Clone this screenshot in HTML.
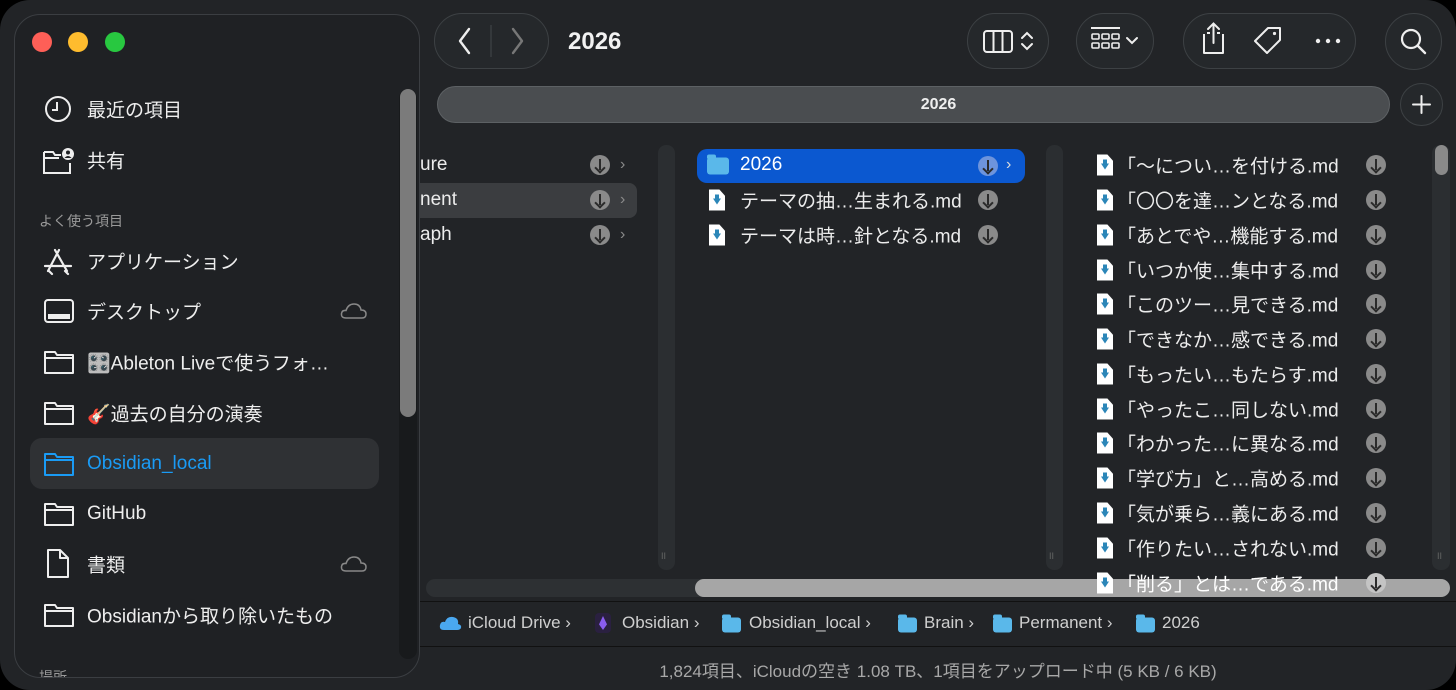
<!DOCTYPE html>
<html><head><meta charset="utf-8"><style>
*{margin:0;padding:0;box-sizing:border-box}
body{width:1456px;height:690px;background:#000;overflow:hidden;font-family:"Liberation Sans","Noto Sans CJK JP",sans-serif;color:#ececec}
.win{position:absolute;left:0;top:0;width:1456px;height:690px;background:#222427;border-radius:30px;overflow:hidden}
.a{position:absolute;white-space:nowrap}
.pill{position:absolute;border:1px solid #3d4144;border-radius:28px;background:#25282b}
.side{position:absolute;left:14px;top:14px;width:406px;height:664px;border-radius:26px;background:#1f2124;border:1px solid #3b3e42;overflow:hidden}
.si{position:absolute;left:72px;font-size:19px;color:#eee;transform:translateY(-50%)}
.dl{position:absolute;width:20px;height:20px;border-radius:50%;background:#8a8a8a;transform:translate(-50%,-50%)}
.dl:after{content:"";position:absolute;left:9px;top:4px;width:2px;height:11px;background:#2a2a2a}
.dl:before{content:"";position:absolute;left:6px;top:9px;width:6px;height:6px;border-right:2px solid #2a2a2a;border-bottom:2px solid #2a2a2a;transform:rotate(45deg)}
.chev{position:absolute;color:#8a8a8a;font-size:16px;transform:translateY(-50%)}
.fi{position:absolute;width:16px;height:21px;background:#fff;transform:translateY(-50%);clip-path:polygon(0 0,65% 0,100% 30%,100% 100%,0 100%)}
.fi:after{content:"";position:absolute;left:4px;top:9px;border:4px solid transparent;border-top:6px solid #2b86b8}
.fi:before{content:"";position:absolute;left:6px;top:5px;width:4px;height:5px;background:#2b86b8}
.ft{position:absolute;font-size:19px;color:#ececec;transform:translateY(-50%)}
.fold{position:absolute;width:22px;height:17px;background:#5ab8ea;border-radius:3px;transform:translateY(-50%)}
.fold:before{content:"";position:absolute;left:0;top:-3px;width:9px;height:4px;background:#5ab8ea;border-radius:2px 2px 0 0}
.pt{position:absolute;top:623px;font-size:17px;color:#cfcfcf;transform:translateY(-50%)}
</style></head><body><div class="win">

<div class="a" style="left:270px;top:140px;width:20px;height:430px;background:#262a2d"></div>

<div class="pill" style="left:434px;top:13px;width:115px;height:56px"></div>
<svg class="a" style="left:434px;top:13px" width="115" height="56"><path d="M35 16 L26 28 L35 40" stroke="#eee" stroke-width="2.4" fill="none" stroke-linecap="round" stroke-linejoin="round"/><line x1="57" y1="12" x2="57" y2="44" stroke="#44484b"/><path d="M79 16 L88 28 L79 40" stroke="#777" stroke-width="2.4" fill="none" stroke-linecap="round" stroke-linejoin="round"/></svg>
<div class="a" style="left:568px;top:28px;font-size:24px;font-weight:bold;color:#f2f2f2">2026</div>

<div class="pill" style="left:967px;top:13px;width:82px;height:56px"></div>
<svg class="a" style="left:967px;top:13px" width="82" height="56"><rect x="17" y="18" width="28" height="21" rx="3" stroke="#eee" stroke-width="2" fill="none"/><line x1="26.5" y1="18" x2="26.5" y2="39" stroke="#eee" stroke-width="2"/><line x1="35.5" y1="18" x2="35.5" y2="39" stroke="#eee" stroke-width="2"/><path d="M55 25 L60 20 L65 25 M55 31 L60 36 L65 31" stroke="#eee" stroke-width="2" fill="none" stroke-linecap="round"/></svg>
<div class="pill" style="left:1076px;top:13px;width:78px;height:56px"></div>
<svg class="a" style="left:1076px;top:13px" width="78" height="56"><line x1="15" y1="15" x2="44" y2="15" stroke="#eee" stroke-width="2"/><g stroke="#eee" stroke-width="1.6" fill="none"><rect x="16" y="21" width="7" height="5" rx="1"/><rect x="26" y="21" width="7" height="5" rx="1"/><rect x="36" y="21" width="7" height="5" rx="1"/><rect x="16" y="30" width="7" height="5" rx="1"/><rect x="26" y="30" width="7" height="5" rx="1"/><rect x="36" y="30" width="7" height="5" rx="1"/></g><path d="M51 25 L56 30 L61 25" stroke="#eee" stroke-width="2" fill="none" stroke-linecap="round"/></svg>
<div class="pill" style="left:1183px;top:13px;width:173px;height:56px"></div>
<svg class="a" style="left:1183px;top:13px" width="173" height="56"><path d="M21 21 L21 40 L40 40 L40 21 M27 20 L24 20 M34 20 L37 20" stroke="#eee" stroke-width="2" fill="none" stroke-linejoin="round"/><path d="M30.5 30 L30.5 11 M25 16 L30.5 10.5 L36 16" stroke="#eee" stroke-width="2" fill="none" stroke-linecap="round"/><path d="M72 28 L85 15 L97 15 L97 27 L84 40 Z" stroke="#eee" stroke-width="2" fill="none" stroke-linejoin="round"/><circle cx="91.5" cy="20.5" r="1.6" fill="#eee"/><circle cx="135" cy="28" r="2.2" fill="#eee"/><circle cx="145" cy="28" r="2.2" fill="#eee"/><circle cx="155" cy="28" r="2.2" fill="#eee"/></svg>
<div class="pill" style="left:1385px;top:13px;width:57px;height:57px;border-radius:50%"></div>
<svg class="a" style="left:1385px;top:13px" width="57" height="57"><circle cx="26" cy="26" r="9" stroke="#eee" stroke-width="2.2" fill="none"/><line x1="33" y1="33" x2="40" y2="40" stroke="#eee" stroke-width="2.4" stroke-linecap="round"/></svg>

<div class="a" style="left:437px;top:86px;width:953px;height:37px;border-radius:19px;background:#4a4d50;border:1px solid #5d6164"></div>
<div class="a" style="left:437px;top:96px;width:1003px;text-align:center;font-size:16px;font-weight:bold;color:#eee">2026</div>
<div class="pill" style="left:1400px;top:83px;width:43px;height:43px;border-radius:50%"></div>
<svg class="a" style="left:1400px;top:83px" width="43" height="43"><path d="M21.5 13 V30 M13 21.5 H30" stroke="#eee" stroke-width="2" stroke-linecap="round"/></svg>

<div class="a" style="left:420px;top:183px;width:217px;height:35px;background:#3b3d40;border-radius:0 8px 8px 0"></div>
<div class="ft" style="left:420px;top:165px">ure</div>
<div class="ft" style="left:420px;top:200px">nent</div>
<div class="ft" style="left:420px;top:235px">aph</div>
<div class="dl" style="left:600px;top:165px"></div><div class="dl" style="left:600px;top:200px"></div><div class="dl" style="left:600px;top:235px"></div>
<div class="chev" style="left:620px;top:165px">›</div><div class="chev" style="left:620px;top:200px">›</div><div class="chev" style="left:620px;top:235px">›</div>

<div class="a" style="left:658px;top:145px;width:17px;height:425px;background:#2b2e31;border-radius:8px"></div>
<div class="a" style="left:1046px;top:145px;width:17px;height:425px;background:#2b2e31;border-radius:8px"></div>
<div class="a" style="left:1432px;top:145px;width:18px;height:425px;background:#2b2e31;border-radius:8px"></div>
<div class="a" style="left:1435px;top:145px;width:13px;height:30px;background:#8a8a8a;border-radius:7px"></div>
<div class="a" style="left:661px;top:551px;font-size:9px;color:#666">II</div>
<div class="a" style="left:1049px;top:551px;font-size:9px;color:#666">II</div>
<div class="a" style="left:1437px;top:551px;font-size:9px;color:#666">II</div>

<div class="a" style="left:697px;top:149px;width:328px;height:34px;background:#0b58d0;border-radius:10px"></div>
<div class="fold" style="left:707px;top:166px"></div>
<div class="ft" style="left:740px;top:165px;color:#fff">2026</div>
<div class="dl" style="left:988px;top:166px;background:#6d94dc"></div>
<div class="chev" style="left:1006px;top:165px;color:#ddd">›</div>
<div class="fi" style="left:709px;top:200px"></div><div class="ft" style="left:740px;top:200px">テーマの抽…生まれる.md</div><div class="dl" style="left:988px;top:200px"></div>
<div class="fi" style="left:709px;top:235px"></div><div class="ft" style="left:740px;top:235px">テーマは時…針となる.md</div><div class="dl" style="left:988px;top:235px"></div>

<div class="fi" style="left:1097px;top:165px"></div><div class="ft" style="left:1117px;top:165px">「〜につい…を付ける.md</div><div class="dl" style="left:1376px;top:165px"></div>
<div class="fi" style="left:1097px;top:200px"></div><div class="ft" style="left:1117px;top:200px">「〇〇を達…ンとなる.md</div><div class="dl" style="left:1376px;top:200px"></div>
<div class="fi" style="left:1097px;top:235px"></div><div class="ft" style="left:1117px;top:235px">「あとでや…機能する.md</div><div class="dl" style="left:1376px;top:235px"></div>
<div class="fi" style="left:1097px;top:270px"></div><div class="ft" style="left:1117px;top:270px">「いつか使…集中する.md</div><div class="dl" style="left:1376px;top:270px"></div>
<div class="fi" style="left:1097px;top:304px"></div><div class="ft" style="left:1117px;top:304px">「このツー…見できる.md</div><div class="dl" style="left:1376px;top:304px"></div>
<div class="fi" style="left:1097px;top:339px"></div><div class="ft" style="left:1117px;top:339px">「できなか…感できる.md</div><div class="dl" style="left:1376px;top:339px"></div>
<div class="fi" style="left:1097px;top:374px"></div><div class="ft" style="left:1117px;top:374px">「もったい…もたらす.md</div><div class="dl" style="left:1376px;top:374px"></div>
<div class="fi" style="left:1097px;top:409px"></div><div class="ft" style="left:1117px;top:409px">「やったこ…同しない.md</div><div class="dl" style="left:1376px;top:409px"></div>
<div class="fi" style="left:1097px;top:443px"></div><div class="ft" style="left:1117px;top:443px">「わかった…に異なる.md</div><div class="dl" style="left:1376px;top:443px"></div>
<div class="fi" style="left:1097px;top:478px"></div><div class="ft" style="left:1117px;top:478px">「学び方」と…高める.md</div><div class="dl" style="left:1376px;top:478px"></div>
<div class="fi" style="left:1097px;top:513px"></div><div class="ft" style="left:1117px;top:513px">「気が乗ら…義にある.md</div><div class="dl" style="left:1376px;top:513px"></div>
<div class="fi" style="left:1097px;top:548px"></div><div class="ft" style="left:1117px;top:548px">「作りたい…されない.md</div><div class="dl" style="left:1376px;top:548px"></div>

<div class="a" style="left:426px;top:579px;width:1024px;height:18px;background:#2d3033;border-radius:9px"></div>
<div class="a" style="left:695px;top:579px;width:755px;height:18px;background:#a6a6a6;border-radius:9px"></div>
<div class="fi" style="left:1097px;top:583px"></div><div class="ft" style="left:1117px;top:583px;color:#fff">「削る」とは…である.md</div><div class="dl" style="left:1376px;top:583px;background:#c4c4c4"></div>

<div class="a" style="left:420px;top:601px;width:1036px;height:1px;background:#111"></div>
<div class="a" style="left:420px;top:646px;width:1036px;height:1px;background:#111"></div>

<svg class="a" style="left:439px;top:615px" width="24" height="16"><path d="M5 15 Q0 15 1 10 Q2 6 6 7 Q8 1 14 2 Q20 3 19 9 Q23 10 22 13 Q21 15 18 15 Z" fill="#4aa8f0"/></svg>
<div class="pt" style="left:468px">iCloud Drive ›</div>
<div class="a" style="left:595px;top:613px;width:16px;height:20px;background:#2a2040;border-radius:4px"><div style="position:absolute;left:4px;top:3px;width:8px;height:14px;background:#8a5cf0;clip-path:polygon(50% 0,100% 60%,50% 100%,0 60%)"></div></div>
<div class="pt" style="left:622px">Obsidian ›</div>
<div class="fold" style="left:722px;top:625px;width:19px;height:15px"></div><div class="pt" style="left:749px">Obsidian_local ›</div>
<div class="fold" style="left:898px;top:625px;width:19px;height:15px"></div><div class="pt" style="left:924px">Brain ›</div>
<div class="fold" style="left:993px;top:625px;width:19px;height:15px"></div><div class="pt" style="left:1019px">Permanent ›</div>
<div class="fold" style="left:1136px;top:625px;width:19px;height:15px"></div><div class="pt" style="left:1162px">2026</div>

<div class="a" style="left:420px;top:657px;width:1036px;text-align:center;font-size:17px;color:#a8a8a8">1,824項目、iCloudの空き 1.08 TB、1項目をアップロード中 (5 KB / 6 KB)</div>

<div class="side">
 <div class="a" style="left:17px;top:17px;width:20px;height:20px;border-radius:50%;background:#fe5f57"></div>
 <div class="a" style="left:53px;top:17px;width:20px;height:20px;border-radius:50%;background:#febc2e"></div>
 <div class="a" style="left:90px;top:17px;width:20px;height:20px;border-radius:50%;background:#28c840"></div>
 <div class="a" style="left:384px;top:74px;width:18px;height:570px;background:#181a1c;border-radius:9px"></div>
 <div class="a" style="left:385px;top:74px;width:16px;height:328px;background:#7b7b7b;border-radius:8px"></div>
 <div class="a" style="left:15px;top:423px;width:349px;height:51px;background:#2f3134;border-radius:12px"></div>
 <svg class="a" style="left:28px;top:80px" width="30" height="30"><circle cx="15" cy="14" r="12" stroke="#eee" stroke-width="2" fill="none"/><path d="M14 7 V15 H9" stroke="#eee" stroke-width="2" fill="none"/></svg>
 <div class="si" style="top:94px">最近の項目</div>
 <svg class="a" style="left:26px;top:131px" width="36" height="30"><path d="M3 6 H12 L14 9 H20 M3 6 V27 H29 V17 M3 12 H18" stroke="#eee" stroke-width="2" fill="none"/><circle cx="27" cy="8" r="6" fill="#eee"/><circle cx="27" cy="6.5" r="2" fill="#1f2124"/><path d="M23.5 12 Q27 8 30.5 12" fill="#1f2124"/></svg>
 <div class="si" style="top:145px">共有</div>
 <div class="a" style="left:24px;top:196px;font-size:14px;color:#9a9a9a">よく使う項目</div>
 <svg class="a" style="left:28px;top:232px" width="32" height="30"><path d="M16 3 L5 24 M12 3 L24 24 M2 19 H28 M9 27 L6 24 M22 24 L25 27" stroke="#eee" stroke-width="2.2" fill="none" stroke-linecap="round"/></svg>
 <div class="si" style="top:246px">アプリケーション</div>
 <svg class="a" style="left:28px;top:282px" width="32" height="30"><rect x="2" y="3" width="28" height="22" rx="3" stroke="#eee" stroke-width="2" fill="none"/><rect x="5" y="17" width="22" height="5" fill="#eee"/></svg>
 <div class="si" style="top:296px">デスクトップ</div>
 <svg class="a" style="left:325px;top:286px" width="28" height="20"><path d="M6 17 Q1 17 1.5 12.5 Q2 9 6 9.5 Q8 3 14 3 Q20 3 21 9 Q26 9 26 13 Q26 17 22 17 Z" stroke="#888" stroke-width="1.5" fill="none"/></svg>
 <div class="si" style="top:549px">書類</div>
 <svg class="a" style="left:325px;top:539px" width="28" height="20"><path d="M6 17 Q1 17 1.5 12.5 Q2 9 6 9.5 Q8 3 14 3 Q20 3 21 9 Q26 9 26 13 Q26 17 22 17 Z" stroke="#888" stroke-width="1.5" fill="none"/></svg>
 <svg class="a" style="left:30px;top:533px" width="28" height="32"><path d="M3 2 H15 L23 10 V29 H3 Z M15 2 V10 H23" stroke="#eee" stroke-width="2" fill="none" stroke-linejoin="round"/></svg>
 <svg class="a" style="left:28px;top:334px" width="32" height="26"><path d="M2 3 H12 L14 6 H30 V24 H2 Z M2 9 H30" stroke="#eee" stroke-width="2" fill="none" stroke-linejoin="round"/></svg>
 <div class="si" style="top:347px">🎛️Ableton Liveで使うフォ…</div>
 <svg class="a" style="left:28px;top:385px" width="32" height="26"><path d="M2 3 H12 L14 6 H30 V24 H2 Z M2 9 H30" stroke="#eee" stroke-width="2" fill="none" stroke-linejoin="round"/></svg>
 <div class="si" style="top:398px">🎸過去の自分の演奏</div>
 <svg class="a" style="left:28px;top:436px" width="32" height="26"><path d="M2 3 H12 L14 6 H30 V24 H2 Z M2 9 H30" stroke="#1a9bf5" stroke-width="2" fill="none" stroke-linejoin="round"/></svg>
 <div class="si" style="top:449px;color:#1a9bf5">Obsidian_local</div>
 <svg class="a" style="left:28px;top:486px" width="32" height="26"><path d="M2 3 H12 L14 6 H30 V24 H2 Z M2 9 H30" stroke="#eee" stroke-width="2" fill="none" stroke-linejoin="round"/></svg>
 <div class="si" style="top:499px">GitHub</div>
 <svg class="a" style="left:28px;top:587px" width="32" height="26"><path d="M2 3 H12 L14 6 H30 V24 H2 Z M2 9 H30" stroke="#eee" stroke-width="2" fill="none" stroke-linejoin="round"/></svg>
 <div class="si" style="top:600px">Obsidianから取り除いたもの</div>
 <div class="a" style="left:24px;top:652px;font-size:14px;color:#9a9a9a">場所</div>
</div>
</div></body></html>
